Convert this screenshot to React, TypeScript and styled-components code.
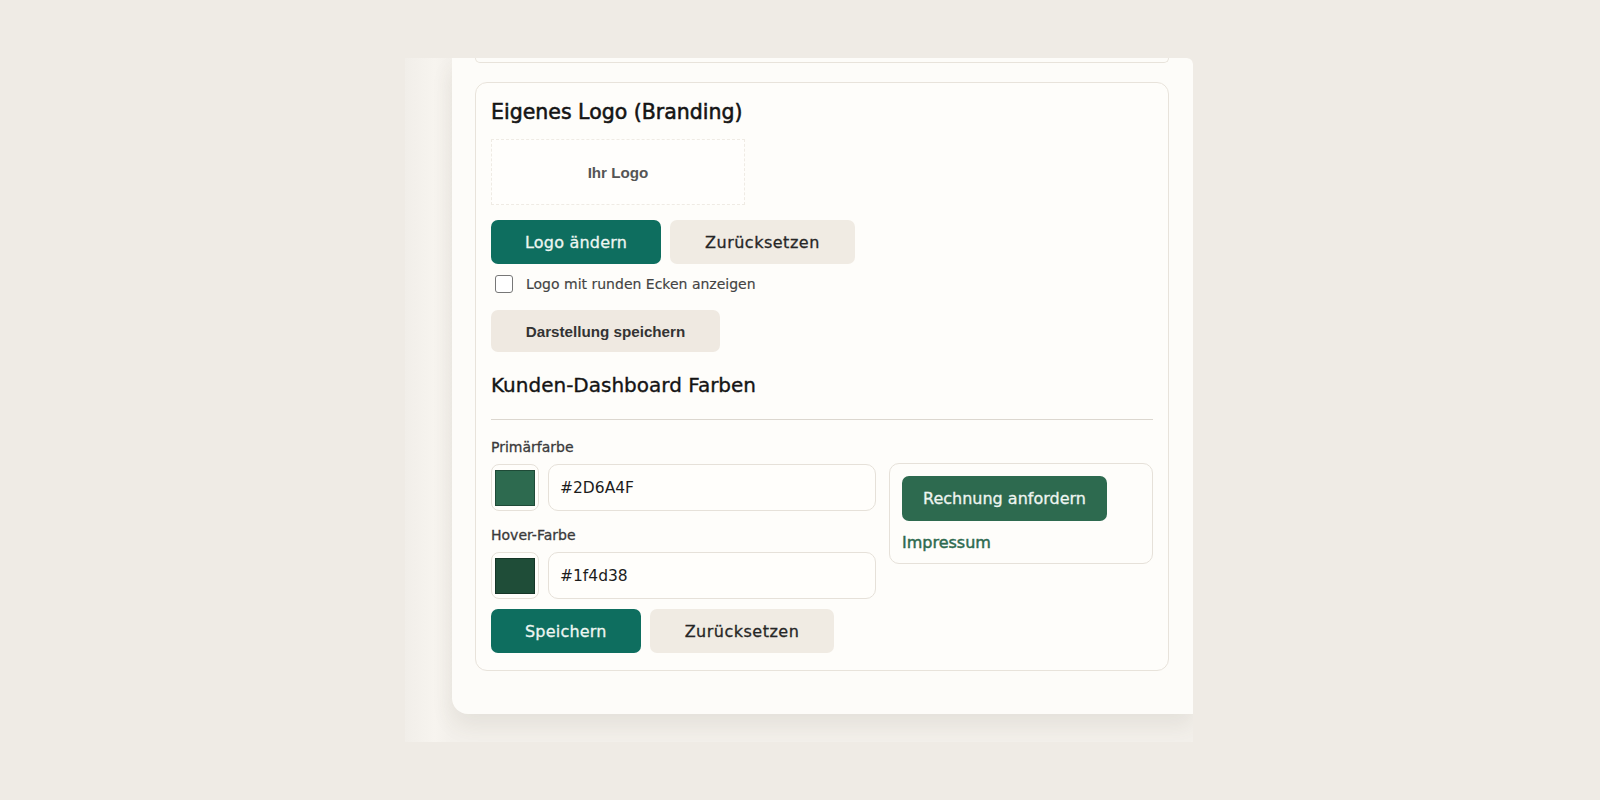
import styled, { createGlobalStyle } from 'styled-components';

const GlobalStyle = createGlobalStyle`
  html, body {
    margin: 0;
    padding: 0;
    background: #efebe5;
    font-family: "DejaVu Sans", Verdana, sans-serif;
    color: #1c1c1c;
  }
`;

const colors = [
  { label: 'Primärfarbe', value: '#2D6A4F', swatch: '#2d6a4f' },
  { label: 'Hover-Farbe', value: '#1f4d38', swatch: '#1f4d38' },
];

const App = () => {
  return (
    <>
      <GlobalStyle />
      <SPage>
        <SFrame>
          <SPanel>
            <SPrevCard />
            <SCard>
              <STitle>Eigenes Logo (Branding)</STitle>
              <SLogoBox>Ihr Logo</SLogoBox>
              <SButtonRow>
                <SButton $variant='primary'>Logo ändern</SButton>
                <SButton>Zurücksetzen</SButton>
              </SButtonRow>
              <SCheckRow>
                <SCheckbox type='checkbox' />
                <span>Logo mit runden Ecken anzeigen</span>
              </SCheckRow>
              <SSmallButton>Darstellung speichern</SSmallButton>

              <SSubTitle>Kunden-Dashboard Farben</SSubTitle>
              <SDivider />

              <SColorGrid>
                <SColorFields>
                  {colors.map((c, i) => (
                    <SField key={c.label} $first={i === 0}>
                      <SLabel>{c.label}</SLabel>
                      <SColorRow>
                        <SSwatchFrame>
                          <SSwatch $color={c.swatch} />
                        </SSwatchFrame>
                        <SHexInput defaultValue={c.value} />
                      </SColorRow>
                    </SField>
                  ))}
                </SColorFields>
                <SPreviewCol>
                  <SPreview>
                    <SPreviewButton>Rechnung anfordern</SPreviewButton>
                    <SPreviewLink>Impressum</SPreviewLink>
                  </SPreview>
                </SPreviewCol>
              </SColorGrid>

              <SButtonRow $bottom>
                <SButton $variant='primary'>Speichern</SButton>
                <SButton>Zurücksetzen</SButton>
              </SButtonRow>
            </SCard>
          </SPanel>
        </SFrame>
      </SPage>
    </>
  );
};

export default App;

const SPage = styled.div`
  padding: 58px 0 0 405px;
  height: 742px;
`;

const SFrame = styled.div`
  width: 788px;
  height: 684px;
  overflow: hidden;
  border-radius: 0 6px 0 0;
  background: linear-gradient(to right, #f1eee9 0%, #f7f4ef 30px, #f3f0eb 47px);
`;

const SPanel = styled.div`
  display: flex;
  flex-direction: column;
  gap: 19px;

  margin-left: 47px;
  height: 656px;
  padding: 0 24px 0 23px;
  box-sizing: border-box;

  background: #fdfcf9;
  border-radius: 0 6px 0 16px;
  box-shadow: 0 12px 22px rgba(90, 75, 50, 0.09);
`;

const SPrevCard = styled.div`
  height: 4px;
  border: 1px solid #e8e3db;
  border-top: none;
  border-radius: 0 0 10px 10px;
`;

const SCard = styled.div`
  display: flex;
  flex-direction: column;
  align-items: flex-start;

  padding: 17px 15px 17px;
  border: 1px solid #e8e3db;
  border-radius: 12px;
  background: #fefdfa;
`;

const STitle = styled.h3`
  margin: 0 0 15px;
  font-size: 20.5px;
  line-height: 24px;
  font-weight: normal;
  color: #141414;
  -webkit-text-stroke: 0.55px #141414;
`;

const SSubTitle = styled.h4`
  margin: 21px 0 22px;
  font-size: 20px;
  line-height: 24px;
  font-weight: normal;
  color: #141414;
  -webkit-text-stroke: 0.35px #141414;
`;

const SLogoBox = styled.div`
  display: flex;
  align-items: center;
  justify-content: center;

  width: 254px;
  height: 66px;
  box-sizing: border-box;
  margin-bottom: 15px;

  border: 1px dashed #efebe4;
  background: #fffefc;

  font-family: "Liberation Sans", Arial, sans-serif;
  font-weight: bold;
  font-size: 15.2px;
  color: #555;
`;

const SButtonRow = styled.div<{ $bottom?: boolean }>`
  display: flex;
  gap: 9px;
  margin-top: ${(p) => (p.$bottom ? '10px' : '0')};
`;

const SButton = styled.button<{ $variant?: 'primary' }>`
  height: 44px;
  padding: 0 ${(p) => (p.$variant === 'primary' ? '34px' : '35px')};
  border: none;
  border-radius: 7px;

  font-family: "DejaVu Sans", Verdana, sans-serif;
  font-size: 16px;
  letter-spacing: ${(p) => (p.$variant === 'primary' ? '0.2px' : '0.5px')};

  background: ${(p) => (p.$variant === 'primary' ? '#0e6e5f' : '#f0ebe3')};
  color: ${(p) => (p.$variant === 'primary' ? '#eef6f2' : '#262626')};
  -webkit-text-stroke: 0.3px
    ${(p) => (p.$variant === 'primary' ? '#eef6f2' : '#262626')};
`;

const SCheckRow = styled.label`
  display: flex;
  align-items: center;
  gap: 13px;

  height: 24px;
  margin: 8px 0 14px 4px;

  font-size: 14px;
  color: #444;
  -webkit-text-stroke: 0.15px #444;
`;

const SCheckbox = styled.input`
  appearance: none;
  width: 18px;
  height: 18px;
  margin: 0;

  border: 1.5px solid #777;
  border-radius: 3px;
  background: #fff;
`;

const SSmallButton = styled.button`
  width: 229px;
  height: 42px;
  border: none;
  border-radius: 7px;

  background: #efe9e1;
  font-family: "Liberation Sans", Arial, sans-serif;
  font-weight: bold;
  font-size: 15.2px;
  color: #333;
`;

const SDivider = styled.div`
  align-self: stretch;
  height: 1px;
  background: #dcd7cf;
  margin-bottom: 19px;
`;

const SColorGrid = styled.div`
  display: grid;
  grid-template-columns: 385px 1fr;
  column-gap: 13px;
  align-self: stretch;
`;

const SColorFields = styled.div`
  display: flex;
  flex-direction: column;
`;

const SField = styled.div<{ $first?: boolean }>`
  margin-top: ${(p) => (p.$first ? '0' : '16px')};
`;

const SLabel = styled.div`
  margin-bottom: 9px;
  font-size: 14px;
  line-height: 16px;
  color: #3a3a3a;
  -webkit-text-stroke: 0.3px #3a3a3a;
`;

const SColorRow = styled.div`
  display: flex;
  gap: 9px;
  height: 47px;
`;

const SSwatchFrame = styled.div`
  display: flex;
  align-items: center;
  justify-content: center;

  width: 48px;
  box-sizing: border-box;
  border: 1px solid #e6e1d9;
  border-radius: 8px;
  background: #fffefb;
`;

const SSwatch = styled.div<{ $color: string }>`
  width: 40px;
  height: 36px;
  border: 1px solid rgba(0, 0, 0, 0.3);
  box-sizing: border-box;
  background: ${(p) => p.$color};
`;

const SHexInput = styled.input`
  flex: 1;
  min-width: 0;
  padding: 0 11px;
  border: 1px solid #e6e1d9;
  border-radius: 10px;
  background: #fffefb;

  font-family: "DejaVu Sans", Verdana, sans-serif;
  font-size: 15.5px;
  color: #1c1c1c;
  outline: none;
`;

const SPreviewCol = styled.div`
  padding-top: 24px;
`;

const SPreview = styled.div`
  display: flex;
  flex-direction: column;
  align-items: flex-start;
  gap: 12px;

  padding: 12px 12px 10px;
  border: 1px solid #e6e1d9;
  border-radius: 10px;
  background: #fefdfa;
`;

const SPreviewButton = styled.button`
  height: 45px;
  padding: 0 21px;
  border: none;
  border-radius: 7px;

  background: #2d6a4f;
  color: #eef5f1;
  font-family: "DejaVu Sans", Verdana, sans-serif;
  font-size: 16px;
  -webkit-text-stroke: 0.3px #eef5f1;
`;

const SPreviewLink = styled.a`
  font-size: 16px;
  line-height: 20px;
  color: #2d6a4f;
  -webkit-text-stroke: 0.45px #2d6a4f;
  text-decoration: none;
`;
